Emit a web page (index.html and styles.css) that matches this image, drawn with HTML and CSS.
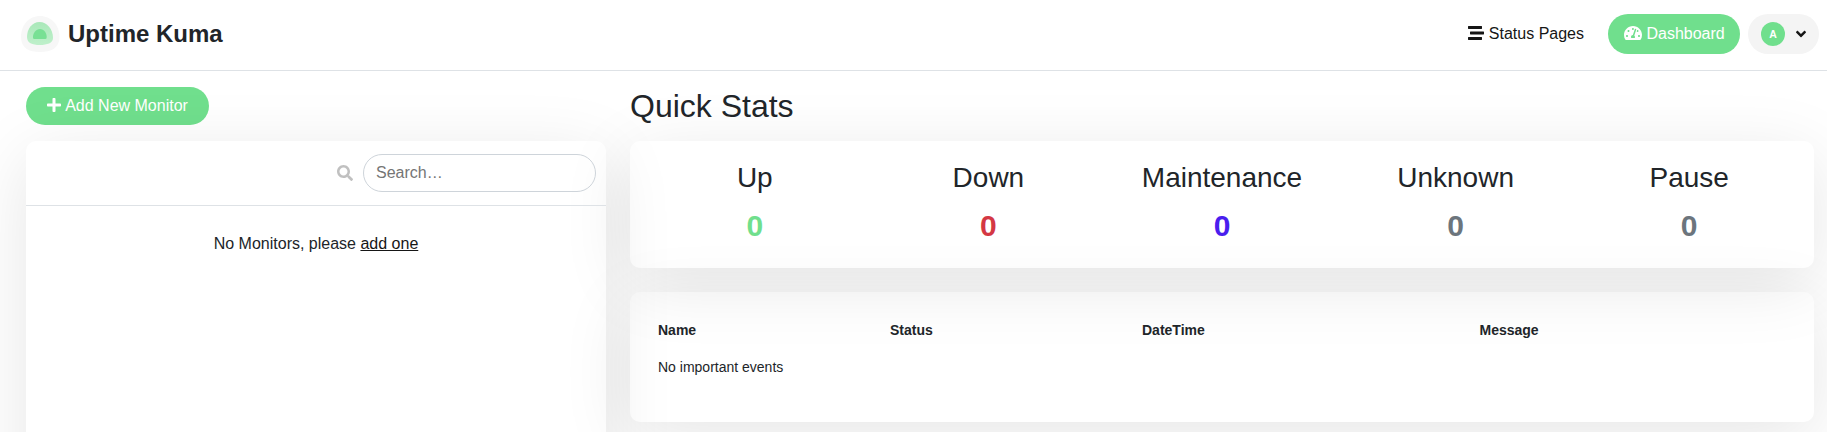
FILE: index.html
```html
<!DOCTYPE html>
<html lang="en">
<head>
<meta charset="utf-8">
<title>Uptime Kuma</title>
<link rel="stylesheet" href="styles.css">
</head>
<body>
<header class="topbar">
  <a class="brand">
    <svg class="logo" viewBox="0 0 40 40">
      <defs><linearGradient id="g" x1="0" y1="0" x2="0" y2="1"><stop offset="0" stop-color="#a9e8b9"/><stop offset="1" stop-color="#bff0cb"/></linearGradient></defs>
      <path fill="#f7f7f7" d="M20 2C31 2 39.500 11 39.500 23C39.500 34 31 38 20 38C9 38 1 34 1 23C1 11 9 2 20 2Z"/>
      <path fill="url(#g)" d="M19.500 8C27 8 33 15 33 24C33 29 27 31 20 31C12 31 7 29 7 23C7 15 12 8 19.500 8Z"/>
      <path fill="#78e094" d="M20 15C24 15 26.700 19 26.700 23C26.700 25 26 25 24 25H15C13 25 13 24.500 13 23C13 19 16 15 20 15Z"/>
    </svg>
    <span class="brand-name">Uptime Kuma</span>
  </a>
  <nav class="nav">
    <a class="nav-link"><svg class="icon" viewBox="0 0 512 512"><path d="M16 128h416c8.840 0 16-7.160 16-16V48c0-8.840-7.160-16-16-16H16C7.160 32 0 39.160 0 48v64c0 8.840 7.160 16 16 16zm480 80H80c-8.840 0-16 7.160-16 16v64c0 8.840 7.160 16 16 16h416c8.840 0 16-7.160 16-16v-64c0-8.840-7.160-16-16-16zm-64 176H16c-8.840 0-16 7.160-16 16v64c0 8.840 7.160 16 16 16h416c8.840 0 16-7.160 16-16v-64c0-8.840-7.160-16-16-16z"/></svg> Status Pages</a>
    <a class="nav-link active"><svg class="icon icon-gauge" viewBox="0 0 576 512"><path d="M288 32C128.940 32 0 160.940 0 320c0 52.800 14.250 102.260 39.060 144.800 5.610 9.620 16.300 15.200 27.440 15.200h443c11.140 0 21.830-5.580 27.440-15.200C561.750 422.260 576 372.800 576 320c0-159.060-128.940-288-288-288zm0 64c14.710 0 26.580 10.130 30.320 23.650-1.110 2.260-2.640 4.230-3.450 6.670l-9.220 27.670c-5.130 3.490-10.970 6.010-17.640 6.010-17.670 0-32-14.330-32-32S270.330 96 288 96zM96 384c-17.670 0-32-14.330-32-32s14.330-32 32-32 32 14.330 32 32-14.330 32-32 32zm48-160c-17.670 0-32-14.330-32-32s14.330-32 32-32 32 14.330 32 32-14.330 32-32 32zm246.770-72.410l-61.330 184C343.130 347.330 352 364.540 352 384c0 11.720-3.380 22.550-8.880 32H232.880c-5.500-9.450-8.880-20.280-8.880-32 0-33.940 26.500-61.430 59.900-63.590l61.340-184.010c4.170-12.560 17.730-19.450 30.360-15.170 12.570 4.190 19.350 17.790 15.170 30.360zm14.660 57.200l15.520-46.550c3.470-1.290 7.130-2.230 11.050-2.230 17.670 0 32 14.330 32 32s-14.330 32-32 32c-11.380-.01-20.890-6.280-26.570-15.220zM480 384c-17.670 0-32-14.330-32-32s14.330-32 32-32 32 14.330 32 32-14.330 32-32 32z"/></svg> Dashboard</a>
    <a class="profile">
      <span class="avatar">A</span>
      <svg class="icon icon-angle" viewBox="0 0 320 512"><path d="M143 352.300L7 216.300c-9.400-9.400-9.400-24.600 0-33.900l22.600-22.600c9.400-9.400 24.600-9.400 33.900 0l96.400 96.400 96.400-96.400c9.400-9.400 24.600-9.400 33.900 0l22.600 22.600c9.400 9.400 9.400 24.600 0 33.900l-136 136c-9.200 9.400-24.400 9.400-33.800 0z"/></svg>
    </a>
  </nav>
</header>
<main class="layout">
  <section class="left">
    <button class="add-btn"><svg class="icon icon-plus" viewBox="0 0 448 512"><path d="M416 208H272V64c0-17.670-14.330-32-32-32h-32c-17.670 0-32 14.330-32 32v144H32c-17.670 0-32 14.330-32 32v32c0 17.670 14.330 32 32 32h144v144c0 17.670 14.330 32 32 32h32c17.670 0 32-14.330 32-32V304h144c17.670 0 32-14.330 32-32v-32c0-17.670-14.330-32-32-32z"/></svg> Add New Monitor</button>
    <div class="card monitor-list">
      <div class="list-header">
        <svg class="icon icon-search" viewBox="0 0 512 512"><path d="M505 442.700L405.300 343c-4.500-4.500-10.600-7-17-7H372c27.600-35.300 44-79.700 44-128C416 93.100 322.900 0 208 0S0 93.100 0 208s93.100 208 208 208c48.300 0 92.700-16.400 128-44v16.300c0 6.400 2.500 12.500 7 17l99.700 99.700c9.400 9.400 24.600 9.400 33.900 0l28.300-28.300c9.400-9.400 9.400-24.600.1-34zM208 336c-70.700 0-128-57.200-128-128 0-70.700 57.200-128 128-128 70.700 0 128 57.200 128 128 0 70.700-57.200 128-128 128z"/></svg>
        <input class="search" placeholder="Search…">
      </div>
      <div class="empty">No Monitors, please <a class="link">add one</a></div>
    </div>
  </section>
  <section class="right">
    <h1 class="title">Quick Stats</h1>
    <div class="card stats">
      <div class="stat"><h3 class="stat-name">Up</h3><span class="num up">0</span></div>
      <div class="stat"><h3 class="stat-name">Down</h3><span class="num down">0</span></div>
      <div class="stat"><h3 class="stat-name">Maintenance</h3><span class="num maintenance">0</span></div>
      <div class="stat"><h3 class="stat-name">Unknown</h3><span class="num muted">0</span></div>
      <div class="stat"><h3 class="stat-name">Pause</h3><span class="num muted">0</span></div>
    </div>
    <div class="card events">
      <table class="table">
        <colgroup><col class="c-name"><col class="c-status"><col class="c-date"><col></colgroup>
        <thead><tr><th>Name</th><th>Status</th><th>DateTime</th><th>Message</th></tr></thead>
        <tbody><tr><td colspan="4">No important events</td></tr></tbody>
      </table>
    </div>
  </section>
</main>
</body>
</html>
```
FILE: styles.css
```css
* { box-sizing: border-box; }
html, body { height: 100%; overflow: hidden; }
body {
  margin: 0;
  background: #fff;
  color: #212529;
  font: 16px/1.5 "Liberation Sans", Arial, sans-serif;
}
.icon { width: 1em; height: 1em; fill: currentColor; vertical-align: -.125em; overflow: visible; }
.icon-gauge { width: 1.125em; }
.icon-plus { width: .875em; margin-right: .5px; }
.icon-angle { width: .625em; }

.topbar {
  display: flex;
  align-items: center;
  justify-content: space-between;
  height: 71px;
  padding: 0 8px 3px 20px;
  border-bottom: 1px solid #dee2e6;
}
.brand { display: flex; align-items: center; gap: 8px; }
.logo { width: 40px; height: 40px; }
.brand-name { font-size: 24px; font-weight: 700; }
.nav { display: flex; align-items: center; gap: 8px; }
.nav-link { height: 40px; padding: 8px 16px; border-radius: 50rem; color: #161616; white-space: nowrap; }
.nav-link.active { width: 132px; background: #70df8d; color: #fff; }
.profile {
  display: flex;
  align-items: center;
  gap: 11px;
  width: 71px;
  height: 40px;
  padding-left: 13px;
  border-radius: 50rem;
  background: #f4f4f4;
  color: #161616;
}
.avatar {
  width: 24px;
  height: 24px;
  border-radius: 50%;
  background: #70df8d;
  color: #fff;
  font-size: 10.5px;
  font-weight: 700;
  line-height: 24px;
  text-align: center;
}

.layout {
  display: grid;
  grid-template-columns: 580px 1184px;
  gap: 24px;
  height: calc(100vh - 71px);
  padding: 16px 13px 0 26px;
  overflow: hidden;
}
.add-btn {
  display: block;
  width: 183px;
  height: 38px;
  margin-bottom: 16px;
  padding: 6px 0;
  border: 0;
  border-radius: 50rem;
  background: #70df8d;
  color: #fff;
  font: inherit;
}
.card { border-radius: 10px; box-shadow: 0 15px 70px rgba(0, 0, 0, .1); }
.monitor-list { position: relative; height: 500px; }
.list-header {
  display: flex;
  align-items: center;
  justify-content: flex-end;
  gap: 10px;
  height: 65px;
  padding: 0 10px 1px;
  border-bottom: 1px solid #dee2e6;
}
.icon-search { color: #c0c0c0; }
.search {
  width: 233px;
  height: 38px;
  padding: 6px 12px;
  border: 1px solid #ced4da;
  border-radius: 19px;
  background: transparent;
  font: inherit;
}
.search::placeholder { color: #757575; opacity: 1; }
.empty { padding-top: 26px; text-align: center; }
.link { color: #161616; text-decoration: underline; }

.title { margin: 0 0 16px; font-size: 32px; font-weight: 400; line-height: 38px; }
.stats { display: grid; grid-template-columns: repeat(5, 1fr); height: 127px; padding: 20px 8px; text-align: center; }
.stat-name { margin: 0 0 8px; font-size: 28px; font-weight: 400; line-height: 1.2; }
.num { display: block; font-size: 30px; font-weight: 700; }
.up { color: #70df8d; }
.down { color: #d43844; }
.maintenance { color: #4a1eee; }
.muted { color: #6c757d; }
.events { height: 130px; margin-top: 24px; padding: 20px; }
.table { width: 100%; border-collapse: collapse; table-layout: fixed; font-size: 14px; }
.table th, .table td { padding: 8px; text-align: left; line-height: 21px; }
.c-name { width: 232px; }
.c-status { width: 252px; }
.c-date { width: 337.5px; }
```
